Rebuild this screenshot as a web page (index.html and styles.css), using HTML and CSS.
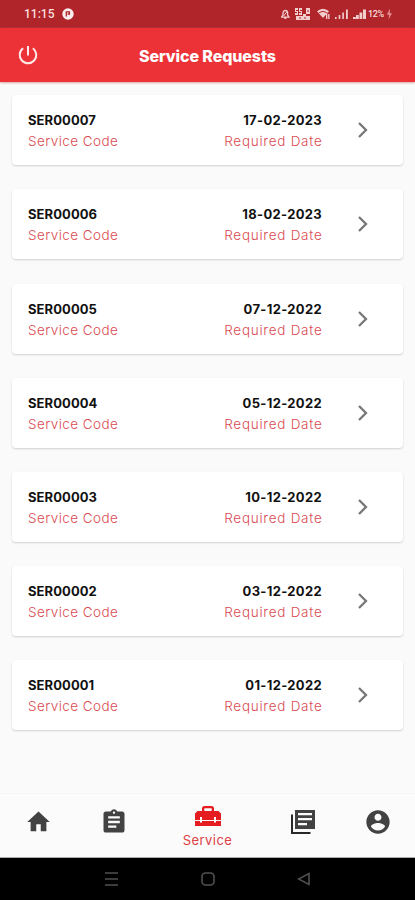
FILE: index.html
```html
<!DOCTYPE html>
<html lang="en">
<head>
<meta charset="utf-8">
<title>Service Requests</title>
<link rel="stylesheet" href="styles.css">
</head>
<body>
<div class="status">
  <span class="time">11:15</span>
  <svg class="app-dot" width="12" height="12" viewBox="0 0 12 12"><circle cx="6" cy="6" r="5.7" fill="#fbeeee"/><path d="M4.3 8.500V3.8H7.4V6H5.6" fill="none" stroke="#b0252a" stroke-width="1.3"/></svg>
  <svg class="indicators" width="86" height="14" viewBox="0 0 86 14" fill="#f2cfcf">
    <path d="M.5 10.200 2 8V5.800a2.300 2.300 0 0 1 4.600 0V8L8 10.200ZM3.300 11.300h2" fill="none" stroke="#f2cfcf" stroke-width="1.300"/><path d="M2.600 9 6 4.600" stroke="#f2cfcf"/>
    <path d="M14 1h3v2h-2v1h2v4h-3V6h2V5h-2ZM18 1h3v2h-2v1h2v4h-3V6h2V5h-2ZM25 1h4v6h-4ZM15 9h14v4H15ZM22 7h3v3h-3Z"/><path d="M27 3v2M19 10v2M24 10v2" stroke="#b0252a"/>
    <path d="M36 4.300q6-5 12 0L42 11Z"/><path d="M38.200 5.600q3.800-2.600 7.600 0" stroke="#b0252a" fill="none"/><path d="M45 7h3.500v5H45Z"/><path d="M46.700 7v5" stroke="#b0252a" stroke-width=".8"/>
    <path d="M54 10h1.600v2H54ZM57.700 8h1.600v4h-1.600ZM61.300 5.500h1.600V12h-1.600ZM65 2.500h1.800V12H65Z"/>
    <path d="M72 10h2.800v2H72ZM75 8h2.800v4H75ZM78.500 5.500h2.800V12h-2.800ZM82 2.500h3V12h-3Z"/>
  </svg>
  <span class="battery">12%</span>
  <svg class="bolt" width="7" height="12" viewBox="0 0 7 12"><path d="M4 .5.8 6.800h2.400l-.7 4.700L6 5.200H3.700Z" fill="#e28d90"/></svg>
</div>
<header class="appbar">
  <svg class="power" width="20" height="20" viewBox="0 0 20 20" fill="none" stroke="#ffe9e9" stroke-width="2"><path d="M10 1v9.500M5.100 3.200a8.300 8.300 0 1 0 9.800 0"/></svg>
  <h1>Service Requests</h1>
</header>
<main class="list">
  <article class="card"><div class="code"><b>SER00007</b><span>Service Code</span></div><div class="date"><b>17-02-2023</b><span>Required Date</span></div><svg class="chevron" viewBox="0 0 12 18"><path d="m2 2 7 7-7 7"/></svg></article>
  <article class="card"><div class="code"><b>SER00006</b><span>Service Code</span></div><div class="date"><b>18-02-2023</b><span>Required Date</span></div><svg class="chevron" viewBox="0 0 12 18"><path d="m2 2 7 7-7 7"/></svg></article>
  <article class="card"><div class="code"><b>SER00005</b><span>Service Code</span></div><div class="date"><b>07-12-2022</b><span>Required Date</span></div><svg class="chevron" viewBox="0 0 12 18"><path d="m2 2 7 7-7 7"/></svg></article>
  <article class="card"><div class="code"><b>SER00004</b><span>Service Code</span></div><div class="date"><b>05-12-2022</b><span>Required Date</span></div><svg class="chevron" viewBox="0 0 12 18"><path d="m2 2 7 7-7 7"/></svg></article>
  <article class="card"><div class="code"><b>SER00003</b><span>Service Code</span></div><div class="date"><b>10-12-2022</b><span>Required Date</span></div><svg class="chevron" viewBox="0 0 12 18"><path d="m2 2 7 7-7 7"/></svg></article>
  <article class="card"><div class="code"><b>SER00002</b><span>Service Code</span></div><div class="date"><b>03-12-2022</b><span>Required Date</span></div><svg class="chevron" viewBox="0 0 12 18"><path d="m2 2 7 7-7 7"/></svg></article>
  <article class="card"><div class="code"><b>SER00001</b><span>Service Code</span></div><div class="date"><b>01-12-2022</b><span>Required Date</span></div><svg class="chevron" viewBox="0 0 12 18"><path d="m2 2 7 7-7 7"/></svg></article>
</main>
<nav class="tabs">
  <a class="tab"><svg width="27" height="28" viewBox="0 0 24 24" preserveAspectRatio="none"><path d="M10 20v-6h4v6h5v-8h3L12 3 2 12h3v8z"/></svg></a>
  <a class="tab"><svg width="28" height="28" viewBox="0 0 24 24"><path fill-rule="evenodd" d="M19 3h-4.180C14.400 1.840 13.300 1 12 1s-2.400.84-2.820 2H5c-1.100 0-2 .9-2 2v14c0 1.100.9 2 2 2h14c1.100 0 2-.9 2-2V5c0-1.100-.9-2-2-2zm-7 0c.55 0 1 .45 1 1s-.45 1-1 1-1-.45-1-1 .45-1 1-1zm2 14H7v-2h7v2zm3-4H7v-2h10v2zm0-4H7V7h10v2z"/></svg></a>
  <a class="tab active"><svg width="26" height="20" viewBox="0 0 26 20"><path fill-rule="evenodd" d="M7 5V2.500Q7 0 9.500 0h7Q19 0 19 2.500V5h4.500L26 7.500V14h-5v-3h-2v3H7v-3H5v3H0V7.500L2.500 5ZM9.300 5h7.400V2.300H9.300ZM0 15h5v1.500h2V15h12v1.500h2V15h5v5H0Z"/></svg><span>Service</span></a>
  <a class="tab"><svg width="26" height="26" viewBox="0 0 26 26"><path d="M2 5.500V24h18.500" fill="none" stroke="#292929" stroke-width="2"/><path fill-rule="evenodd" d="M5 1h20v19H5ZM8 4v2.300h14V4ZM8 9v2.300h14V9ZM8 14v2.300h9V14Z"/></svg></a>
  <a class="tab"><svg width="28" height="28" viewBox="0 0 24 24"><path d="M12 2C6.480 2 2 6.480 2 12s4.480 10 10 10 10-4.480 10-10S17.520 2 12 2zm0 3c1.660 0 3 1.340 3 3s-1.340 3-3 3-3-1.340-3-3 1.340-3 3-3zm0 14.200c-2.500 0-4.710-1.280-6-3.220.03-1.990 4-3.080 6-3.080 1.990 0 5.970 1.090 6 3.080-1.290 1.940-3.500 3.220-6 3.220z"/></svg></a>
</nav>
<footer class="system">
  <svg width="14" height="16" viewBox="0 0 14 16"><path d="M0 2h13M0 8h13M0 14h13"/></svg>
  <svg width="14" height="14" viewBox="0 0 14 14"><rect x="1" y="1" width="12" height="12" rx="3.500"/></svg>
  <svg width="14" height="14" viewBox="0 0 14 14"><path d="M12 1.500v11L1.500 7Z"/></svg>
</footer>
</body>
</html>
```
FILE: styles.css
```css
* { box-sizing: border-box; }
body {
  margin: 0;
  width: 415px;
  height: 900px;
  overflow: hidden;
  display: flex;
  flex-direction: column;
  background: #fafafa;
  font-family: Inter, "Open Sans", sans-serif;
}
svg { display: block; flex: none; }
.status {
  height: 28px;
  flex: none;
  display: flex;
  align-items: center;
  padding: 0 22px 0 24px;
  background: #b0252a;
  color: #f8dede;
}
.time { width: 38px; font: 500 12px/28px Roboto, sans-serif; letter-spacing: 0; }
.indicators { margin-left: auto; }
.battery { width: 17px; margin-left: 1px; font: 500 9px/28px Roboto, sans-serif; letter-spacing: -.4px; }
.bolt { margin-left: 1px; }
.appbar {
  height: 54px;
  flex: none;
  display: grid;
  grid-template-columns: 121px 1fr 120px;
  align-items: center;
  padding: 0 0 0 18px;
  background: #ec3237;
  box-shadow: 0 1px 2px #dba5a6;
}
.appbar h1 {
  margin: 2px 0 0;
  color: #fff;
  font-size: 16px;
  line-height: 24px;
  font-weight: 800;
  letter-spacing: -.1px;
  white-space: nowrap;
}
.list {
  flex: 1;
  display: flex;
  flex-direction: column;
  gap: 24.15px;
  padding: 13.25px 12px 0;
}
.card {
  height: 70px;
  flex: none;
  display: flex;
  padding: 14px 34px 0 16px;
  background: #fff;
  border-radius: 4px;
  box-shadow: 0 1px 2px rgba(0, 0, 0, .17);
}
.card b, .card span { display: block; white-space: nowrap; }
.card b { color: #111; font-size: 13px; line-height: 22px; font-weight: 700; letter-spacing: .08px; }
.card span { color: #da4b52; font-size: 13.5px; line-height: 20px; font-weight: 300; letter-spacing: .43px; }
.code { width: 120px; }
.date { margin-left: auto; text-align: right; }
.card .date b { letter-spacing: .33px; }
.card .date span { letter-spacing: .74px; margin-right: -.5px; }
.chevron {
  width: 12px;
  height: 18px;
  margin: 12px 0 0 35px;
  fill: none;
  stroke: #777;
  stroke-width: 2.300;
}
.tabs {
  height: 65px;
  flex: none;
  display: grid;
  grid-template-columns: 76px 75px 113px 77px 74px;
  border-top: 1px solid #f6f6f6;
  border-bottom: 1px solid #aaa;
  background: #fbfbfb;
  fill: #424242;
}
.tab { display: flex; flex-direction: column; align-items: center; justify-content: center; padding-bottom: 8px; }
.tab.active { justify-content: flex-start; padding: 12px 0 0; fill: #e51c20; color: #dd4046; }
.tab span { margin-top: 4px; font-size: 13px; line-height: 20px; font-weight: 400; letter-spacing: .45px; }
.system {
  height: 42px;
  flex: none;
  display: flex;
  align-items: center;
  gap: 82px;
  padding-left: 105px;
  background: #000;
  fill: none;
  stroke: #505050;
  stroke-width: 1.600;
}
```
